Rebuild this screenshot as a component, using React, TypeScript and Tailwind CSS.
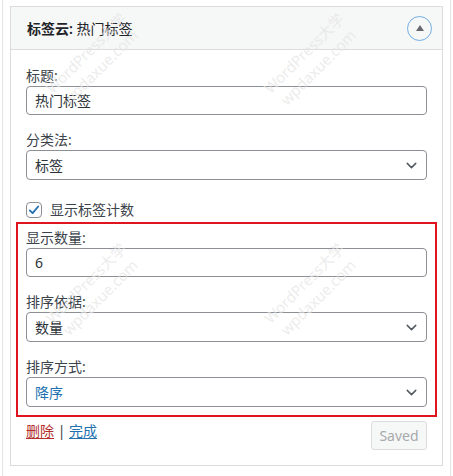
import { ChevronDown } from 'lucide-react';

const font = 'font-["Segoe_UI","Noto_Sans","Noto_Sans_CJK_SC",sans-serif]';

function Label({ text }: { text: string }) {
  return <div className="h-[20px] leading-[20px] text-[14px] text-[#3c434a]">{text}</div>;
}

function TextInput({ value }: { value: string }) {
  return (
    <div className="h-[29px] rounded-[4px] border border-[#8c8f94] bg-white px-[8px] flex items-center text-[14px] text-[#2c3338]">
      {value}
    </div>
  );
}

function Select({ value, blue }: { value: string; blue?: boolean }) {
  return (
    <div className="h-[30px] rounded-[4px] border border-[#8c8f94] bg-white pl-[8px] pr-[6px] flex items-center justify-between text-[14px]">
      <span className={blue ? 'text-[#2271b1]' : 'text-[#2c3338]'}>{value}</span>
      <ChevronDown size={17} strokeWidth={2} className="text-[#50575e]" />
    </div>
  );
}

function Watermark({ top, left }: { top: number; left: number }) {
  return (
    <div
      className="pointer-events-none absolute flex flex-col items-center -rotate-45 text-[15px] leading-[20px] text-[#e4e4e4]/70 font-['Noto_Sans','Noto_Sans_CJK_SC',sans-serif]"
      style={{ top, left }}>
      <span>WordPress大学</span>
      <span>wpdaxue.com</span>
    </div>
  );
}

export default function App() {
  return (
    <div className={`relative w-[453px] h-[476px] bg-white overflow-hidden ${font}`}>
      <div className="mx-[2px] h-full border-x border-[#e4e4e4] pt-[6px]">
        <div className="mx-[7px] border border-[#dcdcde] bg-white">
          {/* header */}
          <div className="h-[43px] bg-[#f6f7f7] border-b border-[#dcdcde] pl-[16px] pr-[10px] flex items-center justify-between">
            <div className="text-[14px] text-[#1d2327]">
              <span className="font-semibold">标签云:</span> 热门标签
            </div>
            <div className="w-[25px] h-[25px] rounded-full border-[1.5px] border-[#72aee6] flex items-center justify-center">
              <div className="w-0 h-0 border-l-[4.5px] border-r-[4.5px] border-b-[6px] border-l-transparent border-r-transparent border-b-[#646970] -mt-[1px]" />
            </div>
          </div>

          {/* body */}
          <div className="px-[15px] pt-[16px] pb-[15px]">
            <Label text="标题:" />
            <TextInput value="热门标签" />

            <div className="mt-[15px]">
              <Label text="分类法:" />
              <Select value="标签" />
            </div>

            <div className="mt-[19px] flex items-center gap-[8px]">
              <div className="w-[16px] h-[16px] rounded-[4px] border border-[#8c8f94] bg-white flex items-center justify-center">
                <svg width="14" height="14" viewBox="0 0 20 20">
                  <path d="M4 10.5 L8 14.5 L16 5" fill="none" stroke="#2271b1" strokeWidth="2.6" strokeLinecap="round" strokeLinejoin="round" />
                </svg>
              </div>
              <span className="text-[14px] text-[#3c434a]">显示标签计数</span>
            </div>

            {/* highlighted settings */}
            <div className="mt-[2px] -mx-[10px] border-2 border-[#e0141e] px-[8px] pt-[4px] pb-[8px]">
              <Label text="显示数量:" />
              <TextInput value="6" />

              <div className="mt-[15px]">
                <Label text="排序依据:" />
                <Select value="数量" />
              </div>

              <div className="mt-[15px]">
                <Label text="排序方式:" />
                <Select value="降序" blue />
              </div>
            </div>

            <div className="mt-[4px] flex items-start justify-between">
              <div className="pt-[0px] text-[14px] leading-[20px]">
                <a className="text-[#b32d2e] underline underline-offset-2">删除</a>
                <span className="text-[#3c434a]"> | </span>
                <a className="text-[#2271b1] underline underline-offset-2">完成</a>
              </div>
              <div className="w-[56px] h-[29px] rounded-[3px] border border-[#dcdcde] bg-[#f6f7f7] flex items-center justify-center text-[14px] text-[#a7aaad]">
                Saved
              </div>
            </div>
          </div>
        </div>
      </div>

      <Watermark top={40} left={40} />
      <Watermark top={40} left={258} />
      <Watermark top={270} left={40} />
      <Watermark top={270} left={258} />
    </div>
  );
}
